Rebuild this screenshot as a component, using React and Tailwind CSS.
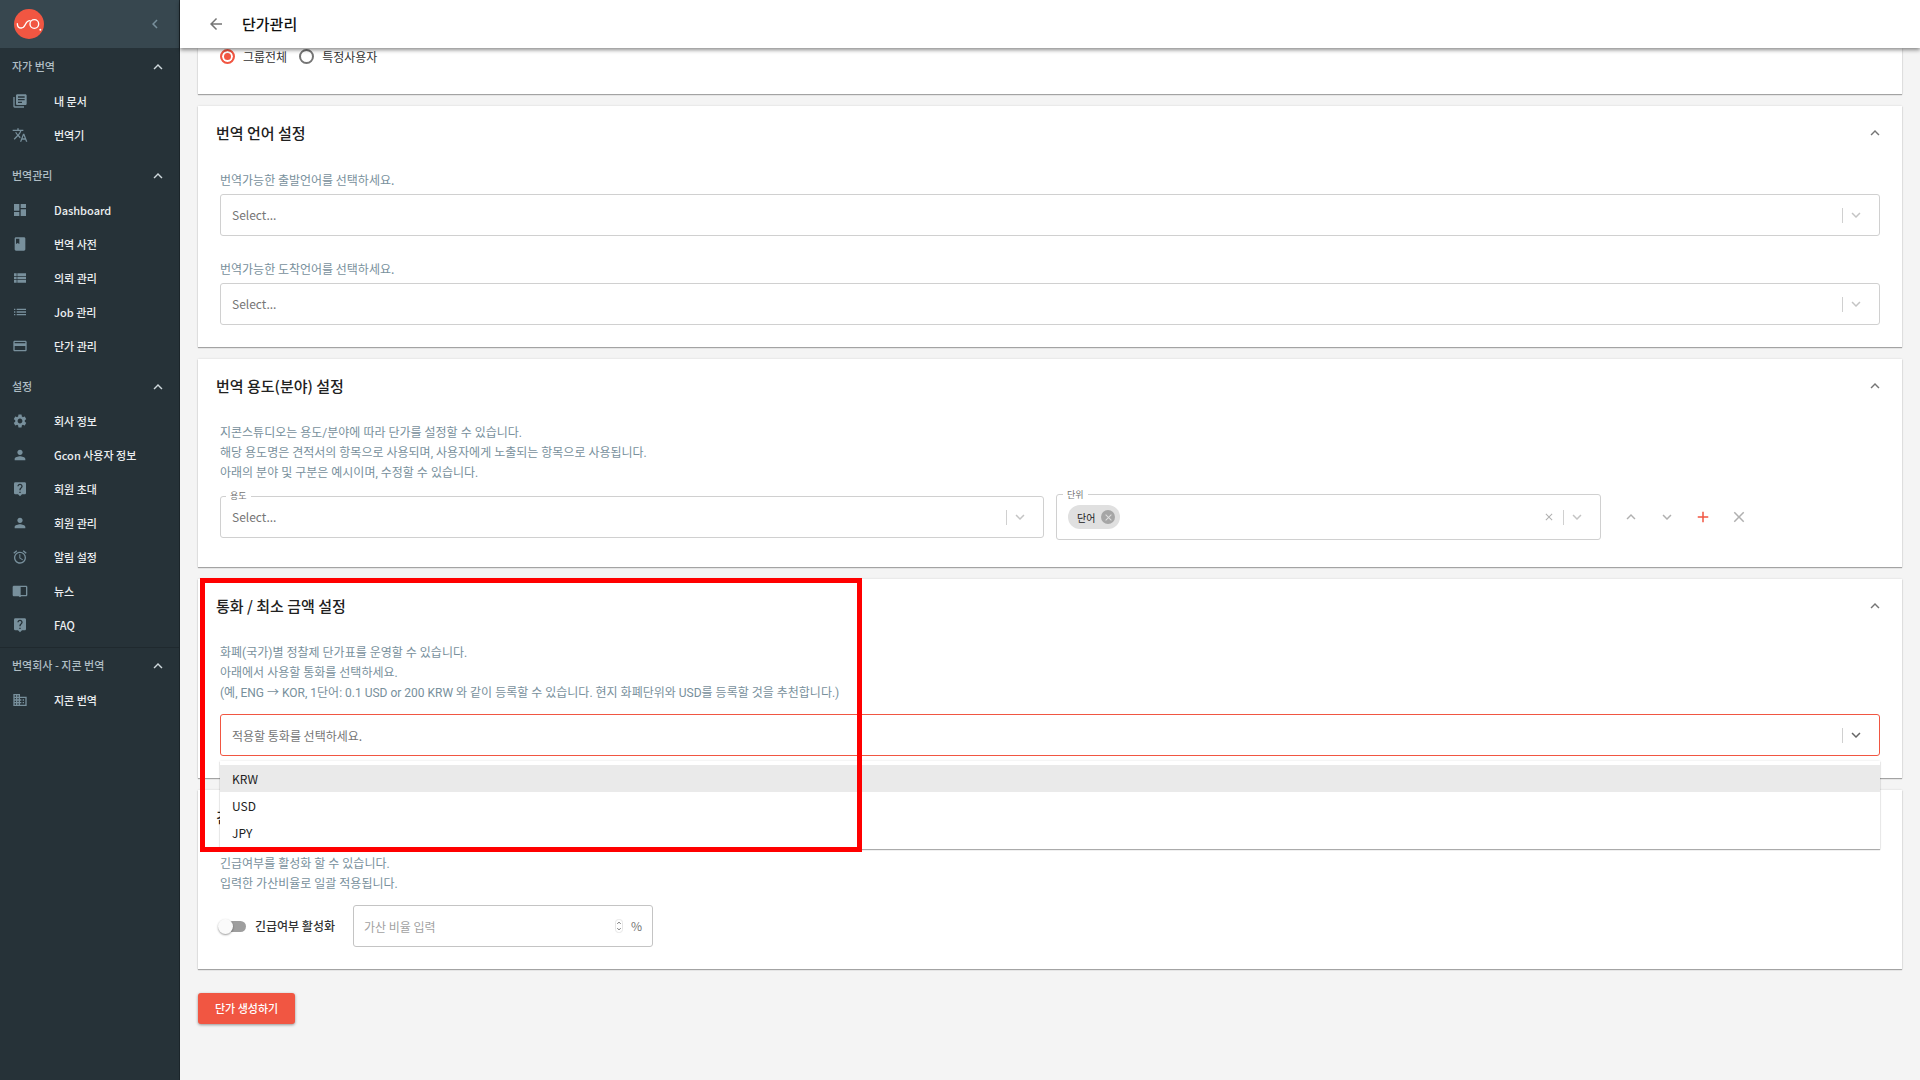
import { useState } from "react";
import {
  MdAdd,
  MdAlarm,
  MdArrowBack,
  MdBook,
  MdBusiness,
  MdChevronLeft,
  MdClose,
  MdDashboard,
  MdExpandLess,
  MdExpandMore,
  MdLibraryBooks,
  MdList,
  MdLiveHelp,
  MdPayment,
  MdPerson,
  MdSettings,
  MdTranslate,
  MdViewList,
} from "react-icons/md";

// open book: filled left page, outlined right page
const NewsIcon = ({ className }) => (
  <svg viewBox="0 0 24 24" fill="currentColor" className={className}>
    <path d="M3 4h18c1.1 0 2 .9 2 2v12c0 1.1-.9 2-2 2h-7l-2 1.5L10 20H3c-1.1 0-2-.9-2-2V6c0-1.1.9-2 2-2zm10 2v12h8V6h-8z" />
  </svg>
);

const menuGroups = [
  {
    title: "자가 번역",
    items: [
      { label: "내 문서", icon: MdLibraryBooks },
      { label: "번역기", icon: MdTranslate },
    ],
  },
  {
    title: "번역관리",
    items: [
      { label: "Dashboard", icon: MdDashboard },
      { label: "번역 사전", icon: MdBook },
      { label: "의뢰 관리", icon: MdViewList },
      { label: "Job 관리", icon: MdList },
      { label: "단가 관리", icon: MdPayment },
    ],
  },
  {
    title: "설정",
    items: [
      { label: "회사 정보", icon: MdSettings },
      { label: "Gcon 사용자 정보", icon: MdPerson },
      { label: "회원 초대", icon: MdLiveHelp },
      { label: "회원 관리", icon: MdPerson },
      { label: "알림 설정", icon: MdAlarm },
      { label: "뉴스", icon: NewsIcon },
      { label: "FAQ", icon: MdLiveHelp },
    ],
  },
  {
    title: "번역회사 - 지콘 번역",
    divider: true,
    items: [{ label: "지콘 번역", icon: MdBusiness }],
  },
];

const currencies = ["KRW", "USD", "JPY"];

const Logo = () => (
  <svg viewBox="0 0 90 90" className="size-[30px]" aria-label="Gcon">
    <circle cx="45" cy="45" r="45" fill="#f15642" />
    <g fill="none" stroke="#fff" strokeWidth="4" strokeLinecap="round">
      <path d="M10 44c0 8 5 13 12 13 14 0 10-22 26-22" />
      <circle cx="61" cy="45" r="13" />
    </g>
    <circle cx="79" cy="62" r="3" fill="#fff" />
  </svg>
);

const Sidebar = () => (
  <aside className="w-[180px] shrink-0 border-r border-[#1b252a] bg-[#263238]">
    <div className="flex h-12 items-center justify-between bg-[#37474f] pr-[15px] pl-[14px]">
      <a href="#home">
        <Logo />
      </a>
      <button type="button" aria-label="메뉴 접기">
        <MdChevronLeft className="size-[18px] text-[#78909c]" />
      </button>
    </div>

    <nav className="flex flex-col gap-[5px] pt-px">
      {menuGroups.map((group) => (
        <div
          key={group.title}
          className={`border-t ${group.divider ? "border-[#1f292e]" : "border-transparent first:border-t-0"}`}
        >
          <button
            type="button"
            className="flex h-[35px] w-full items-center justify-between pr-3 pl-3 text-[11px] font-medium text-[#b0bec5]"
          >
            {group.title}
            <MdExpandLess className="size-[18px] text-[#cfd8dc]" />
          </button>
          <ul>
            {group.items.map(({ label, icon: Icon }) => (
              <li key={label}>
                <a
                  href="#menu"
                  className="flex h-[34px] items-center gap-[26px] pl-3 text-[11px] font-medium text-[#eceff1]"
                >
                  <Icon className="size-4 text-[#78909c]" />
                  {label}
                </a>
              </li>
            ))}
          </ul>
        </div>
      ))}
    </nav>
  </aside>
);

const Card = ({ title, children }) => (
  <section className="relative bg-white shadow-[0_1px_1px_rgba(0,0,0,0.3),0_0_2px_rgba(0,0,0,0.12)]">
    <div className="flex h-[54px] items-center justify-between pr-[18px] pl-[18px]">
      <h2 className="text-[15px] font-medium text-[#212121]">{title}</h2>
      <button type="button" aria-label={`${title} 접기`}>
        <MdExpandLess className="size-[18px] text-[#757575]" />
      </button>
    </div>
    <div className="px-[22px] pt-[10px] pb-[22px]">{children}</div>
  </section>
);

const Description = ({ lines }) => (
  <div className="mb-[11px] font-[Roboto,'Noto_Sans_CJK_KR',sans-serif] text-[12px] leading-5 text-[#78909c]">
    {lines.map((line) => (
      <p key={line}>{line}</p>
    ))}
  </div>
);

// separator + arrow on the right side of every select
const Indicator = ({ active }) => (
  <>
    <span className="h-[15px] w-px bg-[#d0d0d0]" />
    <MdExpandMore
      className={`mr-[14px] ml-1 size-[18px] shrink-0 ${active ? "text-[#666666]" : "text-[#c4c4c4]"}`}
    />
  </>
);

const SelectBox = ({ id }) => (
  <div className="flex h-[42px] items-center rounded-[3px] border border-[#d0d0d0]">
    <select
      id={id}
      className="h-full min-w-0 flex-1 appearance-none bg-transparent pl-[11px] text-[12px] text-[#757575] outline-none"
    >
      <option>Select...</option>
    </select>
    <Indicator />
  </div>
);

const FloatingLabel = ({ htmlFor, children }) => (
  <label
    htmlFor={htmlFor}
    className="absolute -top-[7px] left-[6px] bg-white px-1 text-[9px] leading-[14px] text-[#757575]"
  >
    {children}
  </label>
);

const Radio = ({ label, checked, onChange }) => (
  <label className="flex h-[17px] items-center gap-2 text-[12px] text-[#333333]">
    <input
      type="radio"
      name="target"
      checked={checked}
      onChange={onChange}
      className="size-[15px] appearance-none rounded-full border-2 border-[#757575] checked:border-[#f15642] checked:bg-[#f15642] checked:shadow-[inset_0_0_0_2px_#fff]"
    />
    {label}
  </label>
);

export default function App() {
  const [target, setTarget] = useState("group");
  const [currency, setCurrency] = useState("");
  const [urgent, setUrgent] = useState(false);

  return (
    <div className="flex min-h-screen bg-[#f4f4f4] font-['Noto_Sans_CJK_KR',sans-serif]">
      <Sidebar />

      <div className="min-w-0 flex-1">
        <header className="relative z-20 flex h-12 items-center gap-[17px] bg-white pl-[27px] shadow-[0_2px_4px_rgba(0,0,0,0.45)]">
          <button type="button" aria-label="뒤로">
            <MdArrowBack className="size-[18px] text-[#757575]" />
          </button>
          <h1 className="text-[15px] font-medium text-[#111111]">단가관리</h1>
        </header>

        <main className="flex flex-col gap-3 px-[18px]">
          <section className="flex h-[46px] items-start gap-3 bg-white pl-[22px] shadow-[0_1px_1px_rgba(0,0,0,0.3),0_0_2px_rgba(0,0,0,0.12)]">
            <Radio
              label="그룹전체"
              checked={target === "group"}
              onChange={() => setTarget("group")}
            />
            <Radio
              label="특정사용자"
              checked={target === "user"}
              onChange={() => setTarget("user")}
            />
          </section>

          {/* Languages */}
          <Card title="번역 언어 설정">
            <label
              htmlFor="source"
              className="mb-1 block text-[12px] leading-5 text-[#78909c]"
            >
              번역가능한 출발언어를 선택하세요.
            </label>
            <SelectBox id="source" />
            <label
              htmlFor="dest"
              className="mt-[23px] mb-1 block text-[12px] leading-5 text-[#78909c]"
            >
              번역가능한 도착언어를 선택하세요.
            </label>
            <SelectBox id="dest" />
          </Card>

          {/* Usage / unit */}
          <Card title="번역 용도(분야) 설정">
            <Description
              lines={[
                "지콘스튜디오는 용도/분야에 따라 단가를 설정할 수 있습니다.",
                "해당 용도명은 견적서의 항목으로 사용되며, 사용자에게 노출되는 항목으로 사용됩니다.",
                "아래의 분야 및 구분은 예시이며, 수정할 수 있습니다.",
              ]}
            />
            <div className="mb-[5px] grid grid-cols-12 items-center gap-x-3">
              <div className="relative col-span-6">
                <SelectBox id="usage" />
                <FloatingLabel htmlFor="usage">용도</FloatingLabel>
              </div>
              <div className="relative col-span-4 flex h-[46px] items-center rounded-[3px] border border-[#d0d0d0]">
                <span className="ml-[11px] flex h-6 items-center gap-[6px] rounded-full bg-[#e0e0e0] pr-[5px] pl-[9px] text-[10px] text-[#212121]">
                  단어
                  <button
                    type="button"
                    aria-label="단어 삭제"
                    className="flex size-[14px] items-center justify-center rounded-full bg-[#a6a6a6]"
                  >
                    <MdClose className="size-[11px] text-[#e0e0e0]" />
                  </button>
                </span>
                <input
                  id="unit"
                  type="text"
                  className="h-full min-w-0 flex-1 bg-transparent px-2 text-[12px] outline-none"
                />
                <button type="button" aria-label="모두 지우기" className="mr-2">
                  <MdClose className="size-3 text-[#b0b0b0]" />
                </button>
                <Indicator />
                <FloatingLabel htmlFor="unit">단위</FloatingLabel>
              </div>
              <div className="col-span-2 flex">
                <button type="button" aria-label="위로" className="flex size-9 items-center justify-center">
                  <MdExpandLess className="size-[18px] text-[#b0b0b0]" />
                </button>
                <button type="button" aria-label="아래로" className="flex size-9 items-center justify-center">
                  <MdExpandMore className="size-[18px] text-[#b0b0b0]" />
                </button>
                <button type="button" aria-label="추가" className="flex size-9 items-center justify-center">
                  <MdAdd className="size-[18px] text-[#f15642]" />
                </button>
                <button type="button" aria-label="삭제" className="flex size-9 items-center justify-center">
                  <MdClose className="size-[18px] text-[#b0b0b0]" />
                </button>
              </div>
            </div>
          </Card>

          {/* Currency, lifted so the open list covers the next card */}
          <div className="relative z-10">
            <Card title="통화 / 최소 금액 설정">
              <Description
                lines={[
                  "화폐(국가)별 정찰제 단가표를 운영할 수 있습니다.",
                  "아래에서 사용할 통화를 선택하세요.",
                  "(예, ENG → KOR, 1단어: 0.1 USD or 200 KRW 와 같이 등록할 수 있습니다. 현지 화폐단위와 USD를 등록할 것을 추천합니다.)",
                ]}
              />
              <div className="relative">
                <div className="flex h-[42px] items-center rounded-[3px] border border-[#f15642]">
                  <input
                    type="text"
                    role="combobox"
                    aria-label="통화"
                    aria-expanded="true"
                    aria-controls="currency-list"
                    value={currency}
                    onChange={(e) => setCurrency(e.target.value)}
                    placeholder="적용할 통화를 선택하세요."
                    className="h-full min-w-0 flex-1 bg-transparent pl-[11px] text-[12px] outline-none placeholder:text-[#757575]"
                  />
                  <Indicator active />
                </div>
                <ul
                  id="currency-list"
                  role="listbox"
                  className="absolute inset-x-0 top-full mt-[5px] bg-white pt-1 pb-[3px] shadow-[0_1px_1px_rgba(0,0,0,0.3),0_0_2px_rgba(0,0,0,0.12)]"
                >
                  {currencies.map((item) => (
                    <li
                      key={item}
                      role="option"
                      aria-selected={item === currency}
                      onClick={() => setCurrency(item)}
                      className="h-[27px] pl-3 text-[12px] leading-[27px] text-[#212121] first:bg-[#eaeaea]"
                    >
                      {item}
                    </li>
                  ))}
                </ul>
              </div>
            </Card>
            <div className="pointer-events-none absolute -top-[1px] left-[2px] h-[274px] w-[662px] border-[5px] border-[#ff0000]" />
          </div>

          {/* Urgent surcharge */}
          <Card title="긴급여부 설정">
            <Description
              lines={[
                "긴급여부를 활성화 할 수 있습니다.",
                "입력한 가산비율로 일괄 적용됩니다.",
              ]}
            />
            <div className="flex items-center gap-[18px]">
              <label className="flex items-center gap-[9px] text-[12px] font-medium text-[#333333]">
                <input
                  type="checkbox"
                  role="switch"
                  checked={urgent}
                  onChange={(e) => setUrgent(e.target.checked)}
                  className="relative h-[11px] w-[26px] appearance-none rounded-full bg-[#9e9e9e] before:absolute before:-top-[2px] before:-left-[2px] before:size-[15px] before:rounded-full before:bg-[#fafafa] before:shadow-[0_1px_2px_rgba(0,0,0,0.4)] checked:bg-[#f8aba1] checked:before:left-[13px] checked:before:bg-[#f15642]"
                />
                긴급여부 활성화
              </label>
              <div className="flex h-[42px] w-[300px] items-center rounded-[3px] border border-[#c4c4c4] pr-[10px]">
                <input
                  type="text"
                  inputMode="numeric"
                  aria-label="가산 비율"
                  placeholder="가산 비율 입력"
                  className="h-full min-w-0 flex-1 bg-transparent pl-[10px] text-[12px] outline-none placeholder:text-[#a2a2a2]"
                />
                <svg viewBox="0 0 8 14" className="mr-2 h-[14px] w-2" fill="none">
                  <rect x="0.5" y="0.5" width="7" height="13" rx="3" stroke="#e6e6e6" />
                  <path d="M2.2 5 4 3l1.8 2M2.2 9 4 11l1.8-2" stroke="#8c8c8c" />
                </svg>
                <span className="text-[12px] text-[#757575]">%</span>
              </div>
            </div>
          </Card>

          <button
            type="button"
            className="mt-3 h-[31px] self-start rounded-[3px] bg-[#f15642] px-[17px] text-[11px] font-medium text-white shadow-[0_1px_3px_rgba(0,0,0,0.4)]"
          >
            단가 생성하기
          </button>
        </main>
      </div>
    </div>
  );
}
